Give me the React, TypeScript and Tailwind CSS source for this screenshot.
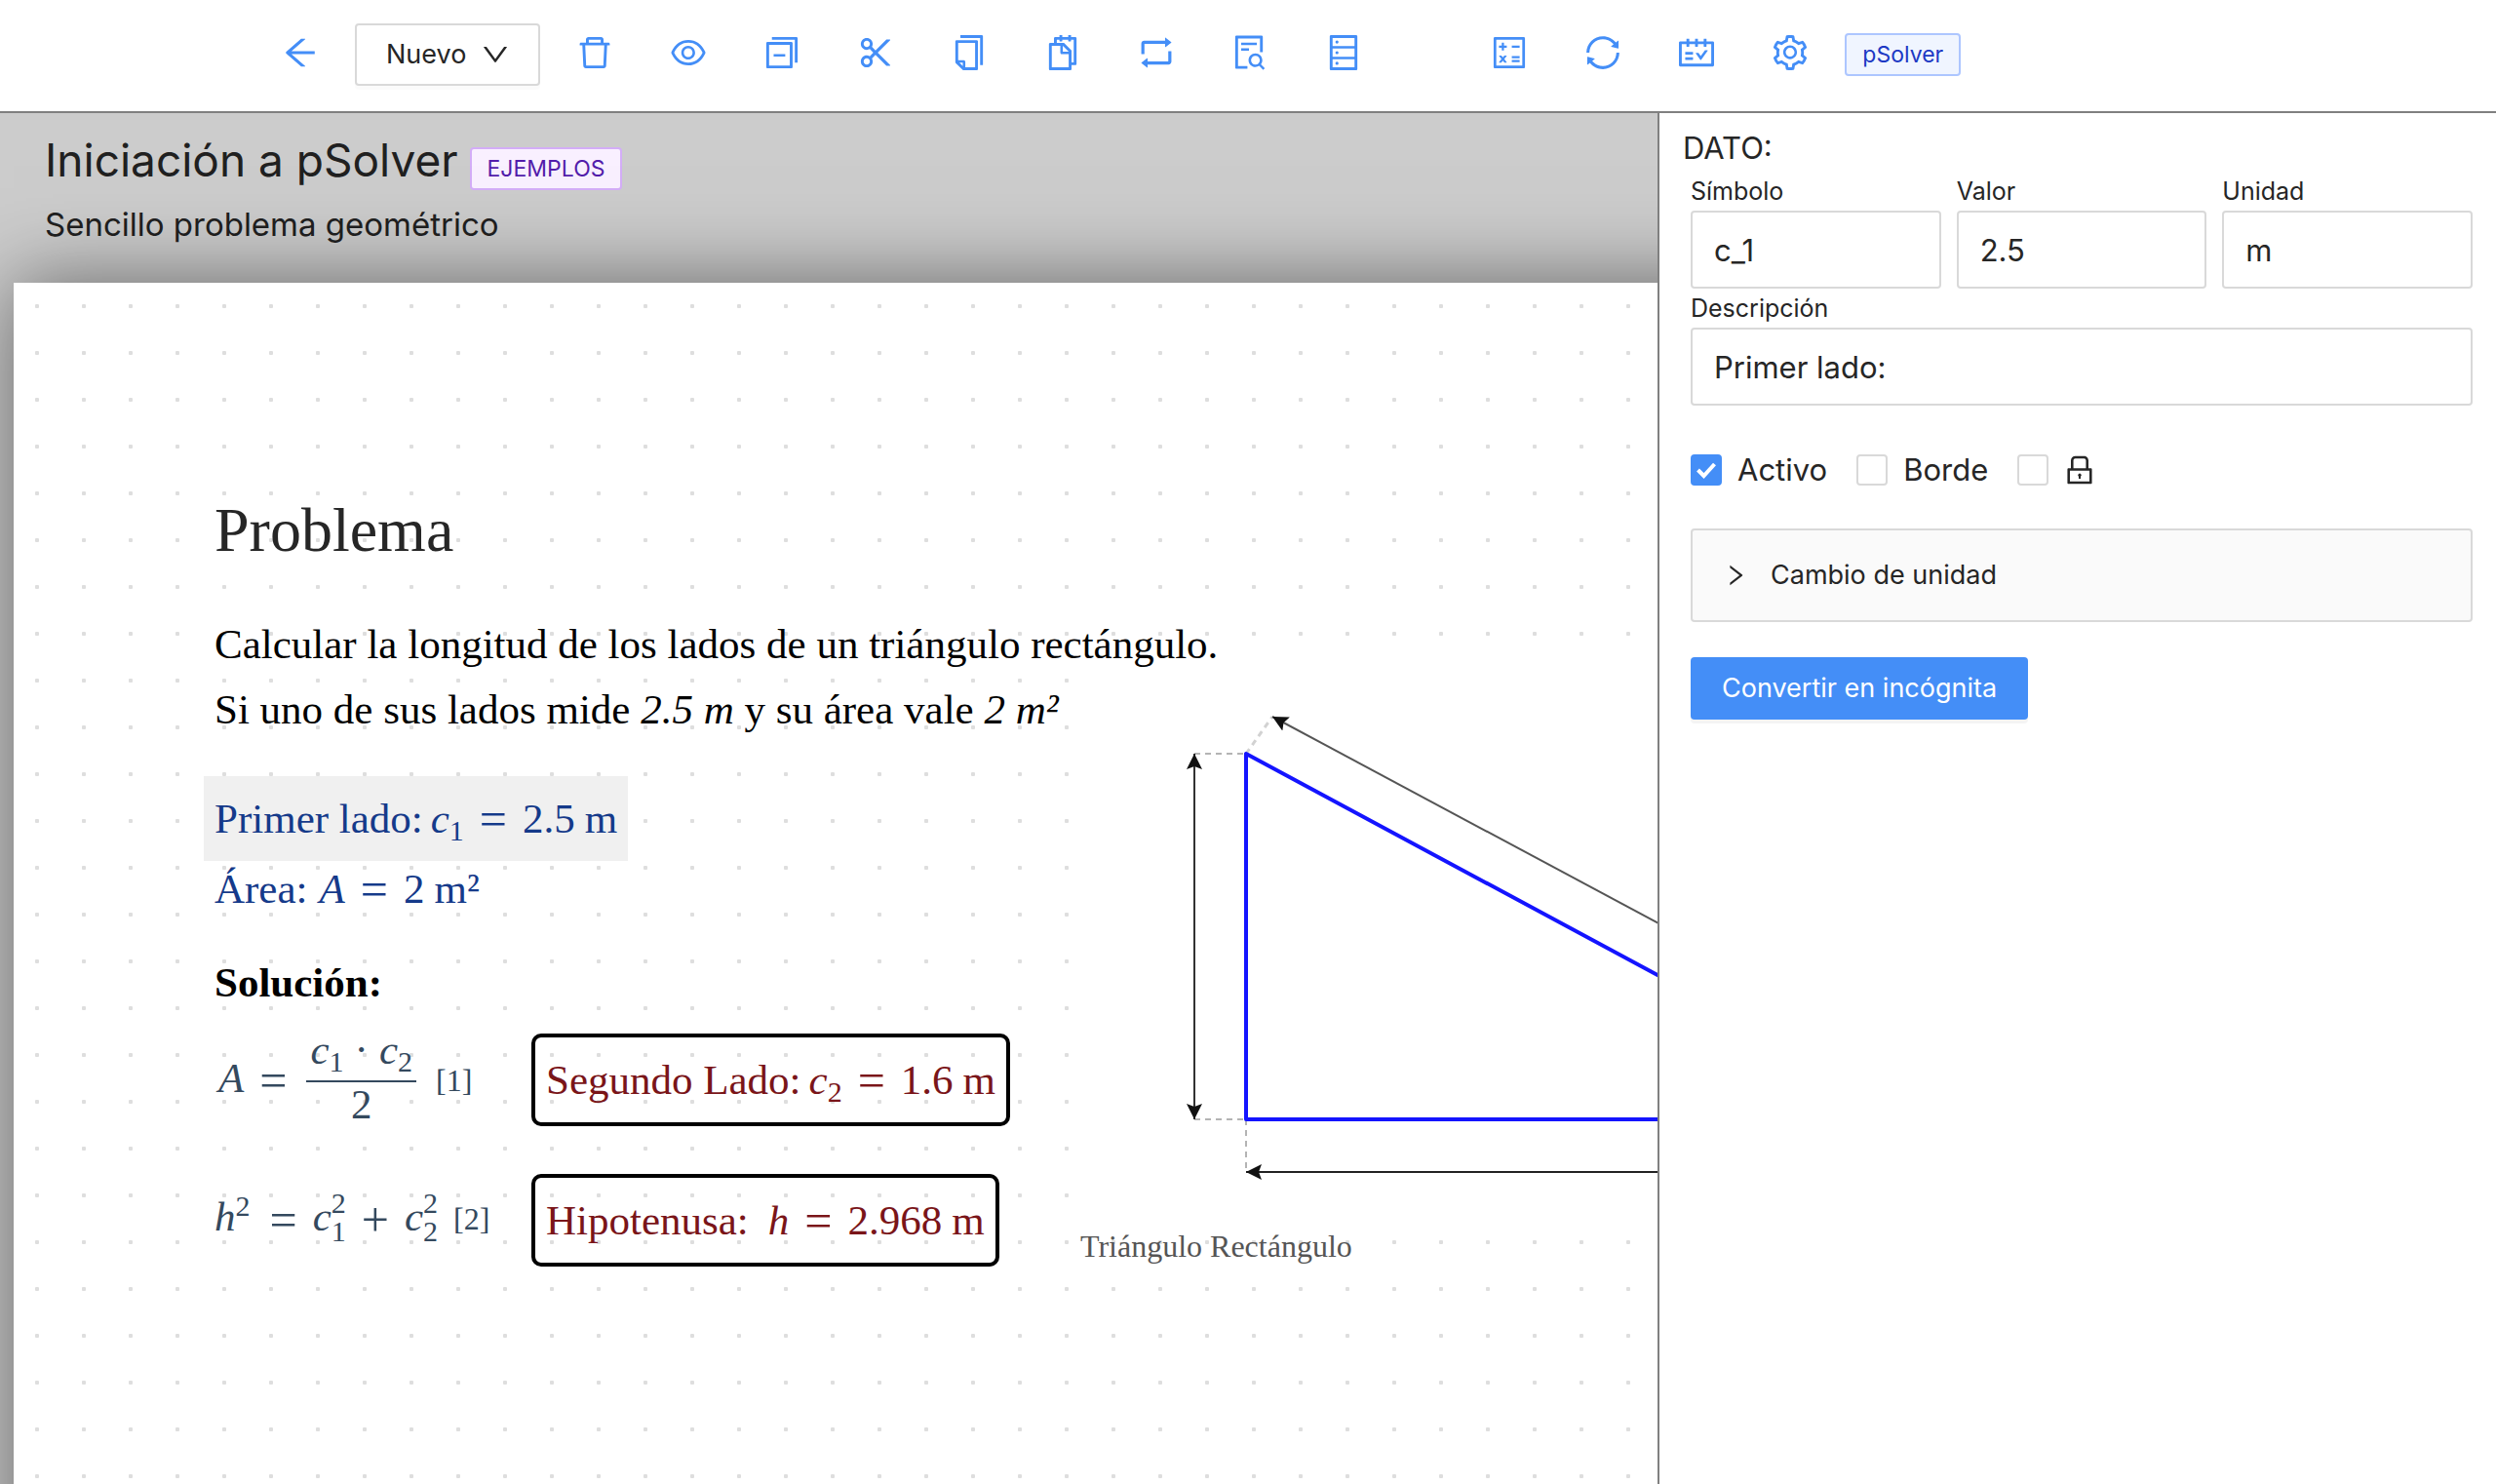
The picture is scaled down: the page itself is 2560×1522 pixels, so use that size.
import { useState, type ReactNode } from "react";
import type { IconType } from "react-icons";
import {
  AiOutlineArrowLeft,
  AiOutlineCalculator,
  AiOutlineCopy,
  AiOutlineDatabase,
  AiOutlineDelete,
  AiOutlineDown,
  AiOutlineEye,
  AiOutlineFileSearch,
  AiOutlineLock,
  AiOutlineRetweet,
  AiOutlineRight,
  AiOutlineSchedule,
  AiOutlineScissor,
  AiOutlineSetting,
  AiOutlineSnippets,
  AiOutlineSwitcher,
  AiOutlineSync,
} from "react-icons/ai";

const ICON_BOX = "64 64 896 896";

const editTools: { icon: IconType; label: string }[] = [
  { icon: AiOutlineDelete, label: "Eliminar" },
  { icon: AiOutlineEye, label: "Ver" },
  { icon: AiOutlineSwitcher, label: "Duplicar" },
  { icon: AiOutlineScissor, label: "Cortar" },
  { icon: AiOutlineCopy, label: "Copiar" },
  { icon: AiOutlineSnippets, label: "Pegar" },
  { icon: AiOutlineRetweet, label: "Reemplazar" },
  { icon: AiOutlineFileSearch, label: "Buscar" },
  { icon: AiOutlineDatabase, label: "Datos" },
];

const solveTools: { icon: IconType; label: string }[] = [
  { icon: AiOutlineCalculator, label: "Calcular" },
  { icon: AiOutlineSync, label: "Actualizar" },
  { icon: AiOutlineSchedule, label: "Resultados" },
  { icon: AiOutlineSetting, label: "Ajustes" },
];

function ToolButton({ icon: Icon, label }: { icon: IconType; label: string }) {
  return (
    <button type="button" aria-label={label} className="flex h-16 w-24 items-center justify-center pb-1 text-[#448ef7]">
      <Icon viewBox={ICON_BOX} className="size-9" />
    </button>
  );
}

function Toolbar() {
  return (
    <header className="flex items-center border-b-2 border-[#808080] bg-white pt-6 pb-[26px] pl-[260px]">
      <ToolButton icon={AiOutlineArrowLeft} label="Volver" />
      <button
        type="button"
        className="mx-2 flex h-16 items-center gap-4 rounded border-2 border-[#d9d9d9] bg-white px-[30px] text-[27px] text-[#262626] shadow-[0_4px_0_rgba(0,0,0,0.016)]"
      >
        Nuevo
        <AiOutlineDown viewBox={ICON_BOX} className="size-7" />
      </button>
      <nav className="flex">
        {editTools.map((t) => (
          <ToolButton key={t.label} {...t} />
        ))}
      </nav>
      <nav className="ml-[74px] flex">
        {solveTools.map((t) => (
          <ToolButton key={t.label} {...t} />
        ))}
      </nav>
      <span className="ml-2 rounded border-2 border-[#adc6ff] bg-[#f0f5ff] px-4 text-[23px] leading-10 text-[#1d39c4]">
        pSolver
      </span>
    </header>
  );
}

function Var({ children }: { children: ReactNode }) {
  return <i className="italic">{children}</i>;
}

/* Relation or operator glyph, lowered onto the maths axis. */
function Operator({ children }: { children: ReactNode }) {
  return <span className="relative top-[3px] mx-4 text-[50px] leading-[40px]">{children}</span>;
}

function Sub({ children }: { children: ReactNode }) {
  return <sub className="text-[30px]">{children}</sub>;
}

function SupSub({ sup, sub }: { sup: string; sub: string }) {
  return (
    <span className="inline-flex flex-col text-[30px] leading-[29px]">
      <span>{sup}</span>
      <span>{sub}</span>
    </span>
  );
}

const nameGap = { sm: "ml-2", md: "ml-3", lg: "ml-5" };

function Quantity({ name, symbol, index, value, unit, gap = "sm" }: {
  name: string;
  symbol: string;
  index?: string;
  value: string;
  unit: string;
  gap?: keyof typeof nameGap;
}) {
  return (
    <span className="inline-flex items-baseline text-[43px] leading-[57px] whitespace-nowrap">
      <span>{name}</span>
      <span className={nameGap[gap]}>
        <Var>{symbol}</Var>
        {index && <Sub>{index}</Sub>}
      </span>
      <Operator>=</Operator>
      <span>{value}</span>
      <span className="ml-[10px]">{unit}</span>
    </span>
  );
}

function Result({ children }: { children: ReactNode }) {
  return (
    <div className="flex items-center justify-self-start rounded-[10px] border-4 border-black px-[11px] text-[#7a1519]">
      {children}
    </div>
  );
}

function Figure() {
  return (
    <figure className="absolute top-[390px] left-[1094px]">
      <svg width="920" height="570" viewBox="0 0 920 570" className="block bg-white" role="img" aria-label="Triángulo rectángulo acotado">
        <defs>
          <marker id="arrow" viewBox="0 0 16 16" refX="16" refY="8" markerWidth="16" markerHeight="16" markerUnits="userSpaceOnUse" orient="auto-start-reverse">
            <path d="M0 0L16 8L0 16L3 8Z" fill="#111" />
          </marker>
        </defs>
        <g stroke="#b4b4b4" strokeWidth="2" strokeDasharray="6 5" fill="none">
          <path d="M117 93H170" />
          <path d="M117 468H170" />
          <path d="M170 468V522" />
          <path d="M170 93L197 55" stroke="#d2d2d2" strokeWidth="3" />
        </g>
        <path d="M170 93V468H867Z" fill="none" stroke="#1414ff" strokeWidth="4" strokeLinejoin="round" />
        <path d="M117 93V468" stroke="#333" strokeWidth="2" markerStart="url(#arrow)" markerEnd="url(#arrow)" />
        <path d="M170 522H867" stroke="#222" strokeWidth="2" markerStart="url(#arrow)" markerEnd="url(#arrow)" />
        <path d="M197 55L894 428" stroke="#555" strokeWidth="2" markerStart="url(#arrow)" markerEnd="url(#arrow)" />
      </svg>
      <figcaption className="mt-1 text-[32px] leading-[48px] text-[#555]">Triángulo Rectángulo</figcaption>
    </figure>
  );
}

function Sheet() {
  return (
    <article className="relative -mr-32 -mb-32 ml-[14px] flex-1 bg-white bg-[radial-gradient(circle,#dedede_2px,transparent_2.5px)] bg-[length:48px_48px] pt-[214px] pb-64 pl-[206px] font-['Liberation_Serif',serif] text-[43px] leading-[67px] text-black shadow-[0_0_80px_rgba(0,0,0,0.5)]">
      <Figure />
      <h2 className="relative text-[64px] leading-[80px] text-[#262626]">Problema</h2>
      <p className="relative mt-[43px]">
        Calcular la longitud de los lados de un triángulo rectángulo.
        <br />
        Si uno de sus lados mide <em>2.5 m</em> y su área vale <em>2 m²</em>
      </p>
      <div className="mt-[35px] text-[#153a8a]">
        <div className="-ml-[11px] flex h-[87px] w-fit items-center bg-[#f0f0f0] px-[11px]">
          <Quantity name="Primer lado:" symbol="c" index="1" value="2.5" unit="m" />
        </div>
        <div className="flex">
          <Quantity name="Área:" symbol="A" value="2" unit="m²" gap="md" />
        </div>
      </div>
      <h3 className="mt-[34px] font-bold">Solución:</h3>
      <div className="mt-[19px] grid auto-rows-[95px] grid-cols-[325px_auto] gap-y-[49px] text-[#34495e]">
        <div className="flex items-center pb-[5px] pl-1">
          <Var>A</Var>
          <Operator>=</Operator>
          <span className="ml-1 flex flex-col">
            <span className="px-1 leading-[40px]">
              <Var>c</Var>
              <Sub>1</Sub>
              <span className="mx-[11px]">·</span>
              <Var>c</Var>
              <Sub>2</Sub>
            </span>
            <span className="mt-[11px] mb-[3px] h-[2px] bg-[#34495e]" />
            <span className="text-center leading-[40px]">2</span>
          </span>
          <span className="ml-5 pt-[6px] text-[32px]">[1]</span>
        </div>
        <Result>
          <Quantity name="Segundo Lado:" symbol="c" index="2" value="1.6" unit="m" />
        </Result>
        <div className="flex items-center pb-2">
          <span className="mr-1">
            <Var>h</Var>
            <sup className="text-[30px]">2</sup>
          </span>
          <Operator>=</Operator>
          <Var>c</Var>
          <SupSub sup="2" sub="1" />
          <Operator>+</Operator>
          <Var>c</Var>
          <SupSub sup="2" sub="2" />
          <span className="ml-4 pt-[6px] text-[32px]">[2]</span>
        </div>
        <Result>
          <Quantity name="Hipotenusa:" symbol="h" value="2.968" unit="m" gap="lg" />
        </Result>
      </div>
    </article>
  );
}

function Field({ id, label, value }: { id: string; label: string; value: string }) {
  const [text, setText] = useState(value);
  return (
    <div className="min-w-0">
      <label htmlFor={id} className="block text-[25px] leading-10">
        {label}
      </label>
      <input
        id={id}
        value={text}
        onChange={(e) => setText(e.target.value)}
        className="h-20 w-full rounded border-2 border-[#d9d9d9] bg-white px-[22px] text-[31px] outline-none"
      />
    </div>
  );
}

function Check({ label, initial = false, children }: { label?: string; initial?: boolean; children: ReactNode }) {
  const [on, setOn] = useState(initial);
  return (
    <label className="flex items-center gap-4">
      <span className="relative flex size-8">
        <input
          type="checkbox"
          aria-label={label}
          checked={on}
          onChange={(e) => setOn(e.target.checked)}
          className="size-8 appearance-none rounded border-2 border-[#d9d9d9] bg-white checked:border-[#448ef7] checked:bg-[#448ef7]"
        />
        {on && (
          <svg viewBox="0 0 32 32" className="pointer-events-none absolute inset-0" fill="none" stroke="white" strokeWidth="4">
            <path d="M7.5 16L13.5 22L24.5 10" />
          </svg>
        )}
      </span>
      {children}
    </label>
  );
}

function Inspector() {
  return (
    <aside className="border-l-2 border-[#808080] bg-white pt-3 pr-6 pl-8 text-[#262626]">
      <h2 className="-ml-2 text-[31px] leading-[48px]">DATO:</h2>
      <div className="grid grid-cols-3 gap-4">
        <Field id="simbolo" label="Símbolo" value="c_1" />
        <Field id="valor" label="Valor" value="2.5" />
        <Field id="unidad" label="Unidad" value="m" />
      </div>
      <Field id="descripcion" label="Descripción" value="Primer lado:" />
      <div className="mt-[50px] flex h-8 items-center gap-[30px] text-[31px]">
        <Check initial>Activo</Check>
        <Check>Borde</Check>
        <Check label="Bloquear">
          <AiOutlineLock viewBox={ICON_BOX} className="size-8" />
        </Check>
      </div>
      <button
        type="button"
        aria-expanded="false"
        className="mt-11 flex h-24 w-full items-center gap-6 rounded border-2 border-[#d9d9d9] bg-[#fafafa] pl-8 text-left text-[27px]"
      >
        <AiOutlineRight viewBox={ICON_BOX} className="size-6" />
        Cambio de unidad
      </button>
      <button
        type="button"
        className="mt-9 h-16 rounded bg-[#448ef7] px-8 text-[27px] text-white shadow-[0_4px_0_rgba(0,0,0,0.045)]"
      >
        Convertir en incógnita
      </button>
    </aside>
  );
}

export default function App() {
  return (
    <div className="flex min-h-screen flex-col bg-white font-['Inter',sans-serif]">
      <Toolbar />
      <div className="grid flex-1 grid-cols-[85fr_43fr]">
        <main className="flex min-w-0 flex-col overflow-hidden bg-[#ccc]">
          <div className="pt-[15px] pb-8 pl-[46px] text-[#202020]">
            <div className="flex items-baseline gap-3">
              <h1 className="text-[46px] leading-[66px]">Iniciación a pSolver</h1>
              <span className="rounded border-2 border-[#d3adf7] bg-[#f9f0ff] px-4 text-[23px] leading-10 text-[#531dab]">
                EJEMPLOS
              </span>
            </div>
            <p className="mt-[5px] text-[33px] leading-[56px]">Sencillo problema geométrico</p>
          </div>
          <Sheet />
        </main>
        <Inspector />
      </div>
    </div>
  );
}
